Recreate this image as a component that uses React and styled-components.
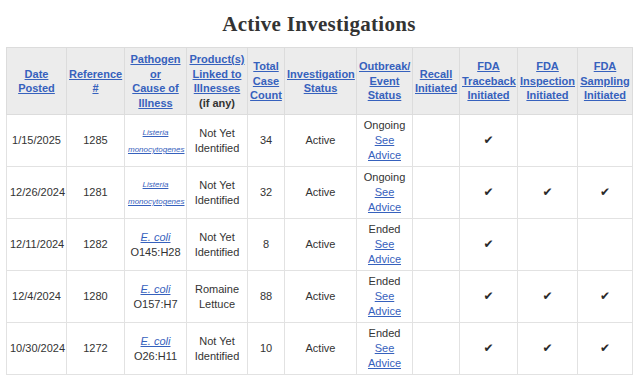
import React from 'react';
import styled, { createGlobalStyle } from 'styled-components';

const GlobalStyle = createGlobalStyle`
  body {
    margin: 0;
    background: #fff;
    font-family: "Liberation Sans", Arial, sans-serif;
  }
`

const Page = styled.div`
  width: 640px;
  padding: 0 8px 0 6px;
  box-sizing: border-box;
`

const Title = styled.h2`
  margin: 10px 0 9px;
  font-family: "Liberation Serif", "DejaVu Serif", serif;
  font-weight: 700;
  font-size: 21px;
  line-height: 28px;
  color: #333;
  text-align: center;
  letter-spacing: 0.3px;
`

const Table = styled.table`
  width: 626px;
  border-collapse: collapse;
  table-layout: fixed;
  font-size: 11px;
  color: #333;
`

const Th = styled.th`
  background: #ececec;
  border: 1px solid #dcdcdc;
  padding: 4px 2px;
  height: 58px;
  line-height: 14.6px;
  font-weight: 700;
  text-align: center;
  vertical-align: middle;
`

const Td = styled.td`
  border: 1px solid #e2e2e2;
  padding: 3px 3px;
  height: 45px;
  line-height: 15px;
  text-align: center;
  vertical-align: middle;
`

const Link = styled.a`
  color: #3661bd;
  text-decoration: underline;
  cursor: pointer;
`

const Note = styled.span`
  color: #333;
`

const Pathogen = styled(Link)`
  font-style: italic;
  font-size: ${p => (p.$small ? '8px' : '11px')};
  line-height: ${p => (p.$small ? '16px' : '15px')};
`

const Check = styled.span`
  font-family: "DejaVu Sans", sans-serif;
  font-size: 12px;
  color: #2a2a2a;
`

const columns = [60, 58, 62, 61, 37, 72, 56, 47, 58, 60, 55]

const rows = [
  { date: '1/15/2025', ref: '1285', pathogen: 'listeria', product: ['Not Yet', 'Identified'], count: '34', status: 'Ongoing', checks: [false, true, false, false] },
  { date: '12/26/2024', ref: '1281', pathogen: 'listeria', product: ['Not Yet', 'Identified'], count: '32', status: 'Ongoing', checks: [false, true, true, true] },
  { date: '12/11/2024', ref: '1282', pathogen: 'O145:H28', product: ['Not Yet', 'Identified'], count: '8', status: 'Ended', checks: [false, true, false, false] },
  { date: '12/4/2024', ref: '1280', pathogen: 'O157:H7', product: ['Romaine', 'Lettuce'], count: '88', status: 'Ended', checks: [false, true, true, true] },
  { date: '10/30/2024', ref: '1272', pathogen: 'O26:H11', product: ['Not Yet', 'Identified'], count: '10', status: 'Ended', checks: [false, true, true, true] },
]

function PathogenCell({ value }) {
  if (value === 'listeria') {
    return <>
      <Pathogen $small>Listeria</Pathogen><br />
      <Pathogen $small>monocytogenes</Pathogen>
    </>
  }
  return <>
    <Pathogen>E. coli</Pathogen><br />
    {value}
  </>
}

export default function App() {
  return <Page>
    <GlobalStyle />
    <Title>Active Investigations</Title>
    <Table>
      <colgroup>
        {columns.map((w, i) => <col key={i} style={{ width: w }} />)}
      </colgroup>
      <thead>
        <tr>
          <Th><Link>Date<br />Posted</Link></Th>
          <Th><Link>Reference<br />#</Link></Th>
          <Th><Link>Pathogen<br />or<br />Cause of<br />Illness</Link></Th>
          <Th><Link>Product(s)<br />Linked to<br />Illnesses</Link><br /><Note>(if any)</Note></Th>
          <Th><Link>Total<br />Case<br />Count</Link></Th>
          <Th><Link>Investigation<br />Status</Link></Th>
          <Th><Link>Outbreak/<br />Event<br />Status</Link></Th>
          <Th><Link>Recall<br />Initiated</Link></Th>
          <Th><Link>FDA<br />Traceback<br />Initiated</Link></Th>
          <Th><Link>FDA<br />Inspection<br />Initiated</Link></Th>
          <Th><Link>FDA<br />Sampling<br />Initiated</Link></Th>
        </tr>
      </thead>
      <tbody>
        {rows.map(r => (
          <tr key={r.ref}>
            <Td>{r.date}</Td>
            <Td>{r.ref}</Td>
            <Td><PathogenCell value={r.pathogen} /></Td>
            <Td>{r.product[0]}<br />{r.product[1]}</Td>
            <Td>{r.count}</Td>
            <Td>Active</Td>
            <Td>{r.status}<br /><Link>See</Link><br /><Link>Advice</Link></Td>
            {r.checks.map((c, i) => <Td key={i}>{c && <Check>✔</Check>}</Td>)}
          </tr>
        ))}
      </tbody>
    </Table>
  </Page>
}
